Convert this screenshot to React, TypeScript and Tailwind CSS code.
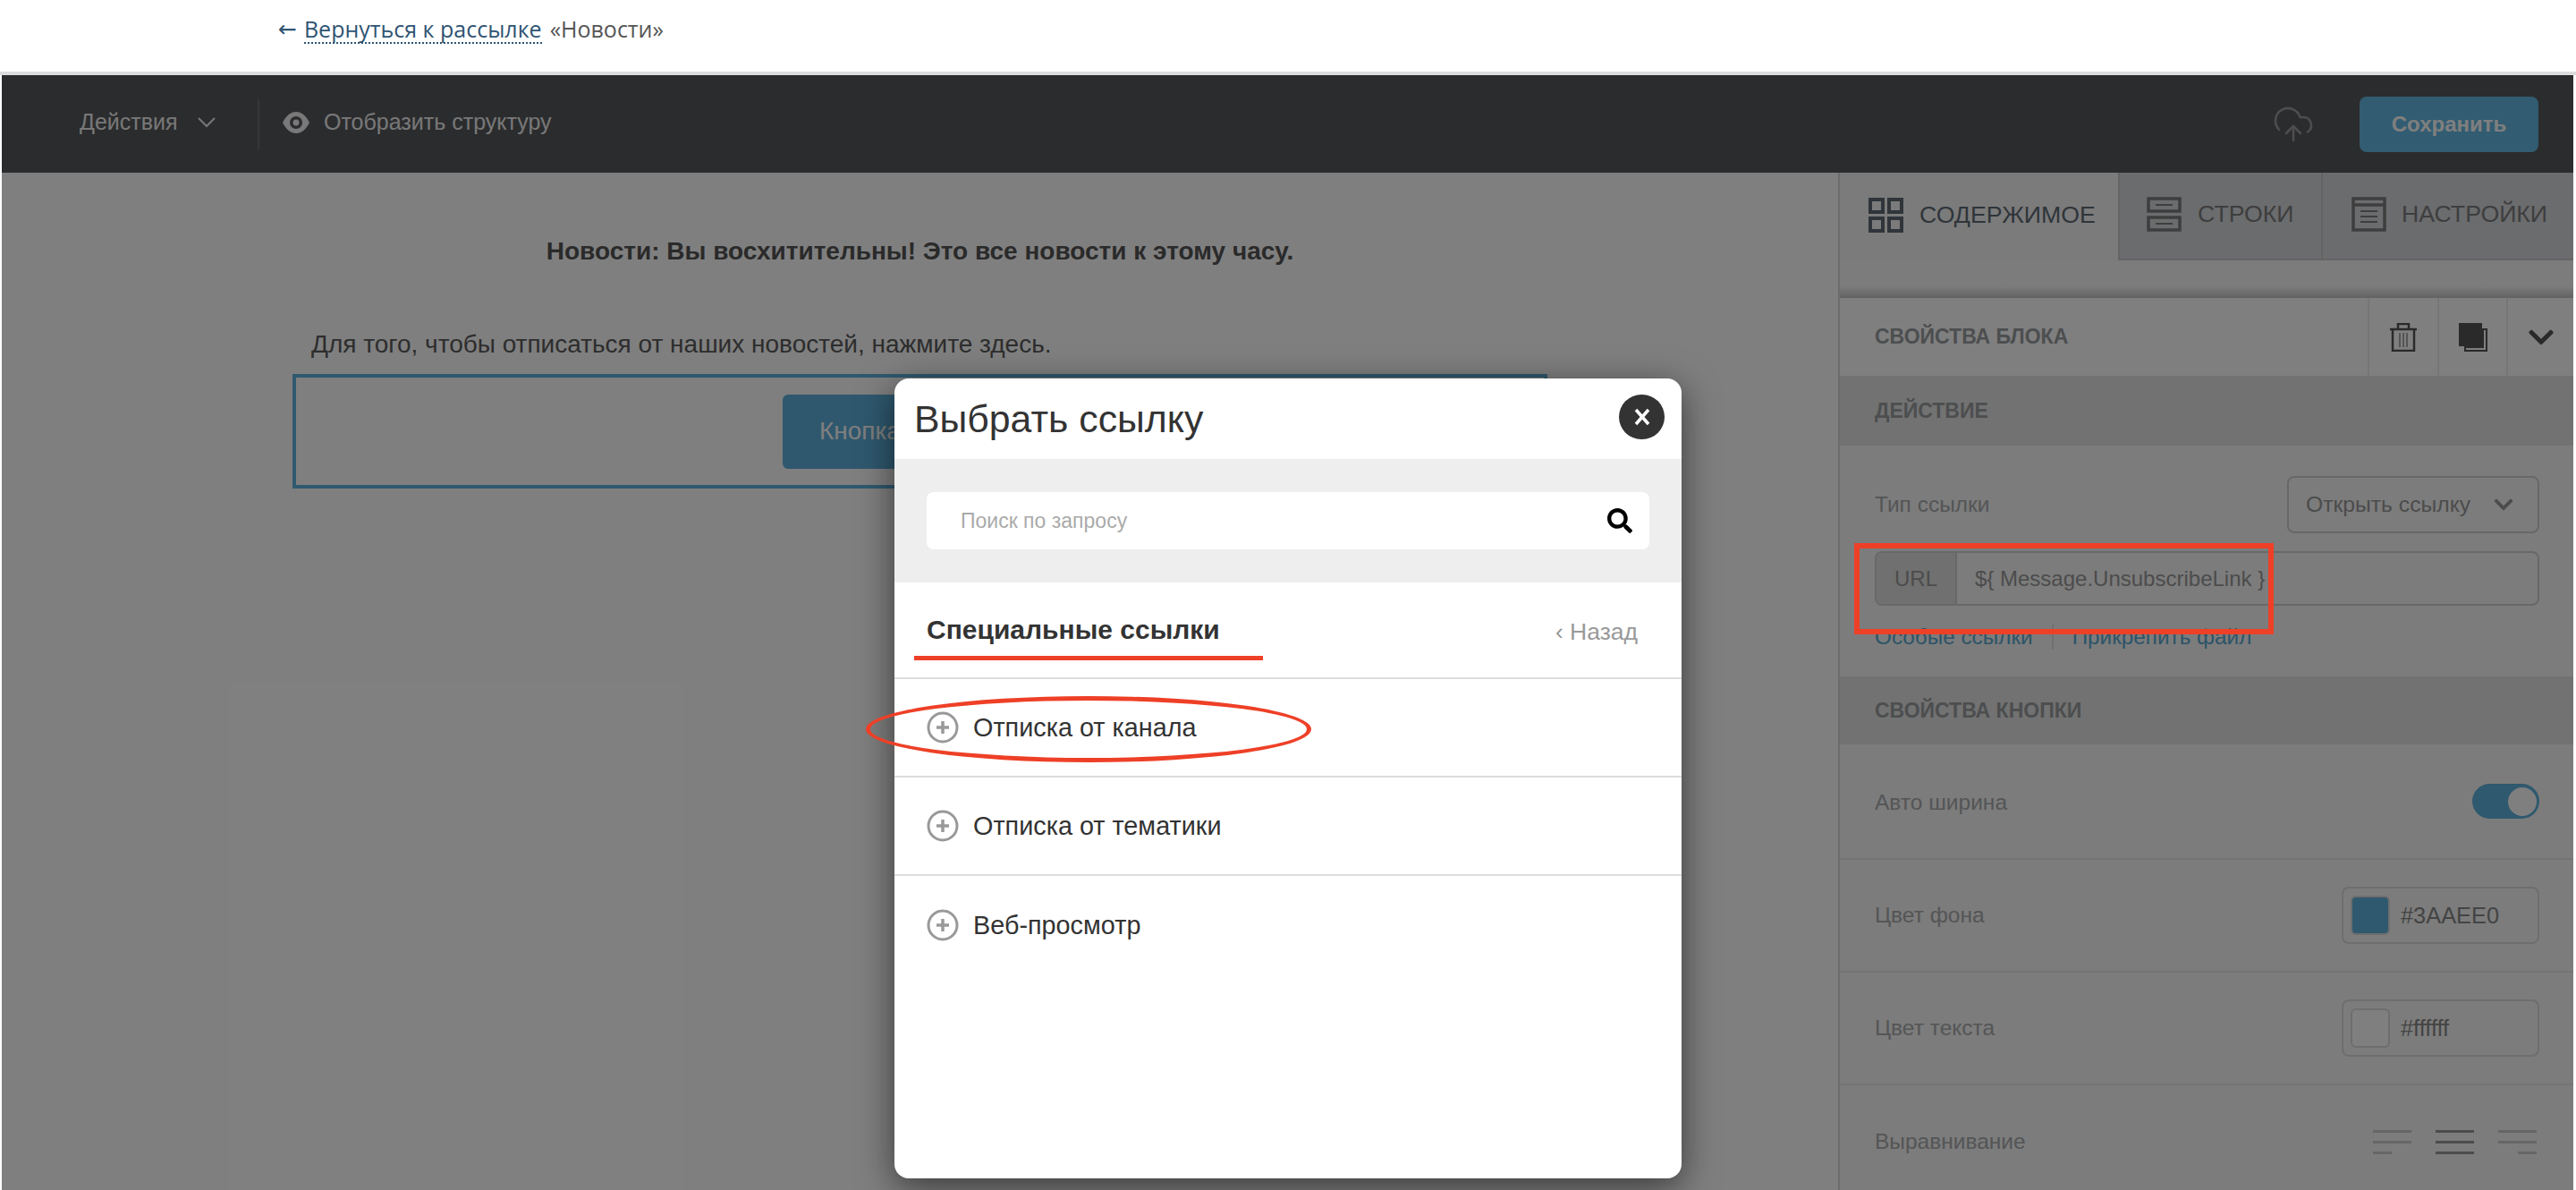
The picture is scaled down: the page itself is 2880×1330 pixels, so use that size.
import { CloudUpload } from "lucide-react";
import { FaChevronDown, FaSearch } from "react-icons/fa";

const sans = "font-['Liberation_Sans',Arial,sans-serif]";

function EyeIcon() {
    return (
        <svg width="30" height="24" viewBox="0 0 30 24">
            <path fillRule="evenodd" d="M0 12C4 4 9 0 15 0s11 4 15 12c-4 8-9 12-15 12S4 20 0 12zm15 7a7 7 0 1 0 0-14 7 7 0 0 0 0 14z" fill="#f2f2f2" />
            <circle cx="15" cy="12" r="3.5" fill="#f2f2f2" />
        </svg>
    );
}

function ContentIcon() {
    return (
        <svg width="39" height="39" viewBox="0 0 39 39" fill="none" stroke="#5f6b75" strokeWidth="4">
            <rect x="2" y="2" width="14" height="14" />
            <rect x="23" y="2" width="14" height="14" />
            <rect x="2" y="23" width="14" height="14" />
            <rect x="23" y="23" width="14" height="14" />
        </svg>
    );
}

function RowsIcon() {
    return (
        <svg width="39" height="39" viewBox="0 0 39 39" fill="none" stroke="#7c7c7c" strokeWidth="3.5">
            <rect x="2" y="2" width="35" height="14" />
            <rect x="2" y="23" width="35" height="14" />
            <path d="M10 9h19M10 30h19" strokeWidth="2" />
        </svg>
    );
}

function SettingsIcon() {
    return (
        <svg width="39" height="39" viewBox="0 0 39 39" fill="none" stroke="#7c7c7c" strokeWidth="3.5">
            <rect x="2" y="2" width="35" height="35" />
            <path d="M2 9h35" />
            <path d="M10 16h19M10 22h19M10 28h19" strokeWidth="2" />
        </svg>
    );
}

function TrashIcon() {
    return (
        <svg width="32" height="32" viewBox="0 0 32 32" fill="none" stroke="#555" strokeWidth="2.5">
            <path d="M1 7h30M10 7V1h12v6M4 7v24h24V7" />
            <path d="M12 11v16M16 11v16M20 11v16" strokeWidth="1" />
        </svg>
    );
}

function CopyIcon() {
    return (
        <svg width="32" height="32" viewBox="0 0 32 32">
            <path d="M27 7h4v24H7v-4h20z" fill="none" stroke="#555" strokeWidth="2" />
            <rect x="0" y="0" width="26" height="26" fill="#555" />
        </svg>
    );
}

function AlignIcon({ side, active }: { side: "left" | "center" | "right"; active?: boolean }) {
    const color = active ? "#999" : "#ccc";
    const x = side === "left" ? 0 : side === "right" ? 22 : 0;
    const w = side === "center" ? 43 : 21;
    return (
        <svg width="43" height="27" viewBox="0 0 43 27" fill={color}>
            <rect x="0" y="0" width="43" height="3" />
            <rect x="0" y="12" width="43" height="3" />
            <rect x={x} y="24" width={w} height="3" />
        </svg>
    );
}

function PlusCircle() {
    return (
        <svg width="36" height="36" viewBox="0 0 36 36" fill="none" stroke="#999">
            <circle cx="18" cy="18" r="16" strokeWidth="3" />
            <path d="M18 11v14M11 18h14" strokeWidth="3.5" />
        </svg>
    );
}

function SectionBand({ title, height }: { title: string; height: string }) {
    return (
        <div className={`flex items-center bg-[#e4e4e4] pl-[39px] text-[23px] font-bold text-[#999c9f] ${height}`}>
            {title}
        </div>
    );
}

function ColorRow({ label, value, swatch }: { label: string; value: string; swatch: string }) {
    return (
        <div className="flex h-[126px] items-center justify-between border-b-[2px] border-[#e8e8e8] pr-[38px] pl-[39px]">
            <span className="text-[24.5px] text-[#a8abad]">{label}</span>
            <div className="flex h-[64px] w-[221px] items-center gap-[12px] rounded-[8px] border-[2px] border-[#dcdcdc] pl-[8px]">
                <div className={`h-[44px] w-[44px] rounded-[6px] border-[2px] border-[#dcdcdc] ${swatch}`} />
                <span className="text-[25.4px] text-[#888]">{value}</span>
            </div>
        </div>
    );
}

function LinkRow({ label, last }: { label: string; last?: boolean }) {
    return (
        <div className={`flex h-[110px] items-center gap-[16px] pl-[36px] ${last ? "" : "border-b-[2px] border-[#ddd]"}`}>
            <PlusCircle />
            <span className="pt-[2px] text-[28.8px] text-[#333]">{label}</span>
        </div>
    );
}

export default function App() {
    return (
        <div className={`relative h-[1330px] w-[2880px] overflow-hidden bg-white ${sans}`}>
            <div className="flex h-[80px] items-center pb-[14px] pl-[311px] font-['Open_Sans',sans-serif] text-[25px] text-[#555]">
                <span className="mr-[8px] font-['DejaVu_Sans',sans-serif] text-[#2f5473]">←</span>
                <span className="border-b-[2px] border-dotted border-[#2f5473] leading-[30px] text-[#2f5473]">Вернуться к рассылке</span>
                <span className="ml-[9px]">«Новости»</span>
            </div>
            <div className="h-[4px] bg-[#dcdcdc]" />

            <div className="relative mr-[3px] ml-[2px] flex h-[1246px] flex-col">
                <div className="flex h-[109px] items-center bg-[#56585c] text-[25px] text-[#f0f0f0]">
                    <div className="flex h-[56px] w-[288px] items-center border-r-[2px] border-[#6a6c70] pb-[3px] pl-[87px]">
                        <span>Действия</span>
                        <svg className="ml-[22px]" width="20" height="12" viewBox="0 0 20 12" fill="none" stroke="#f0f0f0" strokeWidth="2">
                            <path d="M1 1l9 9 9-9" />
                        </svg>
                    </div>
                    <div className="ml-[26px] flex items-center gap-[16px] pb-[3px]">
                        <EyeIcon />
                        <span>Отобразить структуру</span>
                    </div>
                    <div className="ml-auto flex items-center gap-[50px] pr-[39px]">
                        <CloudUpload size={48} strokeWidth={1.3} color="#9a9a9a" />
                        <div className="flex h-[62px] w-[200px] items-center justify-center rounded-[8px] bg-[#64b8e2] text-[24px] font-bold text-white">
                            Сохранить
                        </div>
                    </div>
                </div>

                <div className="flex min-h-0 flex-1">
                    <div className="flex-1 bg-white">
                        <div className="pt-[67px] text-center text-[28px] font-bold text-[#555]">
                            Новости: Вы восхитительны! Это все новости к этому часу.
                        </div>
                        <div className="mx-auto mt-[68px] w-[1403px]">
                            <div className="pb-[18px] pl-[21px] text-[28px] leading-[30px] text-[#5a5a5a]">
                                Для того, чтобы отписаться от наших новостей, нажмите здесь.
                            </div>
                            <div className="flex h-[128px] items-center justify-center border-[4px] border-[#5fb3dc]">
                                <div className="flex h-[83px] w-[307px] items-center rounded-[6px] bg-[#5fb0dc] pl-[41px] text-[28px] text-white">
                                    Кнопка
                                </div>
                            </div>
                        </div>
                    </div>

                    <div className="w-[822px] border-l-[2px] border-[#d8d8d8] bg-[#f8f8f8]">
                        <div className="flex h-[98px] text-[26.7px] text-[#7c7c7c]">
                            <div className="flex w-[311px] items-center gap-[18px] bg-[#f6f6f6] pb-[4px] pl-[32px] text-[#5f6b75]">
                                <ContentIcon />
                                СОДЕРЖИМОЕ
                            </div>
                            <div className="flex w-[227px] items-center gap-[18px] border-b-[2px] border-l-[2px] border-[#c8c8c8] bg-[#d6d8dc] pb-[4px] pl-[30px]">
                                <RowsIcon />
                                СТРОКИ
                            </div>
                            <div className="flex flex-1 items-center gap-[17px] border-b-[2px] border-l-[2px] border-[#c8c8c8] bg-[#d6d8dc] pb-[4px] pl-[32px]">
                                <SettingsIcon />
                                НАСТРОЙКИ
                            </div>
                        </div>
                        <div className="h-[42px] bg-gradient-to-b from-[#f8f8f8] from-70% to-[#c4c4c4]" />

                        <div className="flex h-[87px] items-center bg-white">
                            <span className="flex-1 pl-[39px] text-[23px] font-bold text-[#999c9f]">СВОЙСТВА БЛОКА</span>
                            <div className="flex h-full w-[78px] items-center justify-center border-l-[2px] border-[#ececec]"><TrashIcon /></div>
                            <div className="flex h-full w-[77px] items-center justify-center border-l-[2px] border-[#ececec]"><CopyIcon /></div>
                            <div className="flex h-full w-[75px] items-center justify-center border-l-[2px] border-[#ececec] text-[#555]"><FaChevronDown size={32} /></div>
                        </div>
                        <SectionBand title="ДЕЙСТВИЕ" height="h-[78px]" />

                        <div className="h-[258px] pr-[38px] pl-[39px]">
                            <div className="flex items-center justify-between pt-[34px]">
                                <span className="text-[24.5px] text-[#a8abad]">Тип ссылки</span>
                                <div className="flex h-[64px] w-[282px] items-center justify-between rounded-[8px] border-[2px] border-[#d0d0d0] pr-[26px] pl-[19px] text-[24.7px] text-[#999]">
                                    Открыть ссылку
                                    <FaChevronDown size={24} color="#999" />
                                </div>
                            </div>
                            <div className="mt-[20px] flex h-[61px] overflow-hidden rounded-[8px] border-[2px] border-[#d0d0d0] text-[24px] text-[#999]">
                                <div className="flex w-[90px] items-center justify-center border-r-[2px] border-[#d0d0d0] bg-[#e0e0e0]">URL</div>
                                <div className="flex items-center pl-[20px]">{"${ Message.UnsubscribeLink }"}</div>
                            </div>
                            <div className="mt-[21px] flex items-center text-[24.3px] leading-[28px] text-[#5aa8d0]">
                                <span>Особые ссылки</span>
                                <div className="mx-[21px] h-[28px] w-[2px] bg-[#e0e0e0]" />
                                <span>Прикрепить файл</span>
                            </div>
                        </div>
                        <SectionBand title="СВОЙСТВА КНОПКИ" height="h-[76px]" />

                        <div className="flex h-[129px] items-center justify-between border-b-[2px] border-[#e8e8e8] pr-[38px] pl-[39px]">
                            <span className="pt-[3px] text-[24.5px] text-[#a8abad]">Авто ширина</span>
                            <div className="flex h-[39px] w-[75px] items-center justify-end rounded-full bg-[#5fb3dc] pr-[3px]">
                                <div className="h-[32px] w-[32px] rounded-full bg-white" />
                            </div>
                        </div>
                        <ColorRow label="Цвет фона" value="#3AAEE0" swatch="bg-[#5fb3dc]" />
                        <ColorRow label="Цвет текста" value="#ffffff" swatch="bg-white" />
                        <div className="flex h-[126px] items-center justify-between pr-[41px] pl-[39px]">
                            <span className="text-[24.5px] text-[#a8abad]">Выравнивание</span>
                            <div className="flex gap-[27px]">
                                <AlignIcon side="left" />
                                <AlignIcon side="center" active />
                                <AlignIcon side="right" />
                            </div>
                        </div>
                    </div>
                </div>

                <div className="absolute inset-0 bg-black/50" />
            </div>

            {/* modal over the dimmed editor */}
            <div className="absolute top-[423px] left-[1000px] h-[894px] w-[880px] overflow-hidden rounded-[16px] bg-white shadow-[0_10px_40px_rgba(0,0,0,0.55)]">
                <div className="relative flex h-[90px] items-center pl-[22px] text-[42.8px] text-[#333]">
                    Выбрать ссылку
                    <div className="absolute top-[18px] right-[19px] flex h-[50px] w-[51px] items-center justify-center rounded-full bg-[#333]">
                        <svg width="18" height="20" viewBox="0 0 18 20" stroke="white" strokeWidth="3.5">
                            <path d="M2 2l14 16M16 2L2 18" />
                        </svg>
                    </div>
                </div>
                <div className="flex h-[138px] items-center bg-[#eee] px-[36px]">
                    <div className="flex h-[64px] w-full items-center justify-between rounded-[8px] bg-white pr-[19px] pl-[38px] text-[23px] text-[#aaa]">
                        Поиск по запросу
                        <FaSearch size={28} color="#000" />
                    </div>
                </div>
                <div className="relative flex h-[108px] items-center justify-between border-b-[2px] border-[#ddd] pr-[49px] pl-[36px]">
                    <span className="pb-[1px] text-[30px] font-bold text-[#333]">Специальные ссылки</span>
                    <span className="pt-[6px] text-[26.5px] text-[#999]">‹ Назад</span>
                </div>
                <LinkRow label="Отписка от канала" />
                <LinkRow label="Отписка от тематики" />
                <LinkRow label="Веб-просмотр" last />
            </div>

            {/* red annotations */}
            <div className="absolute top-[733px] left-[1022px] h-[5px] w-[390px] bg-[#ee4027]" />
            <div className="absolute top-[778px] left-[968px] h-[74px] w-[498px] rounded-[50%] border-[5px] border-[#ee4027]" />
            <div className="absolute top-[607px] left-[2073px] h-[102px] w-[469px] border-[6px] border-[#ee4027]" />
        </div>
    );
}
